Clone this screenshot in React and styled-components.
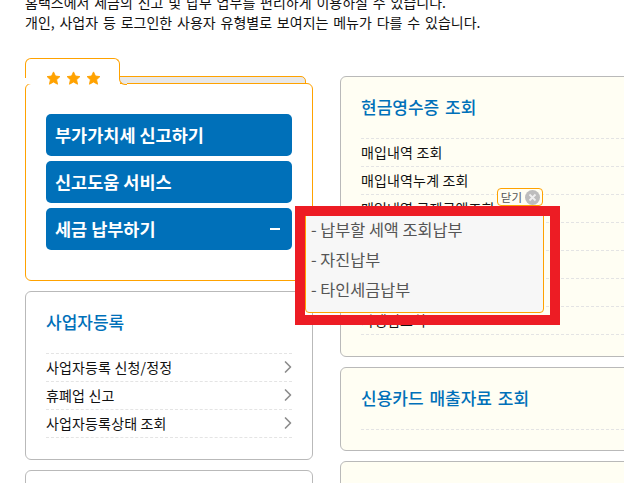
import React from "react";
import styled, { createGlobalStyle } from "styled-components";
import { ChevronRight } from "lucide-react";

const GlobalStyle = createGlobalStyle`
	html, body {
		margin: 0;
		padding: 0;
		height: 100%;
		overflow: hidden;
		background: #fff;
	}
	body {
		font-family: "Noto Sans CJK KR", "Noto Sans", sans-serif;
		color: #111;
	}
	* {
		box-sizing: border-box;
	}
`;

const colors = {
	blue: "#0070b9",
	orange: "#ffa200",
	line: "#b9b9b9",
	dash: "#e4e4e4",
	cream: "#fffef3",
};

const businessMenu = ["사업자등록 신청/정정", "휴폐업 신고", "사업자등록상태 조회"];
const cashMenu = [
	"매입내역 조회",
	"매입내역누계 조회",
	"매입내역 공제금액조회",
	"매출내역 조회",
	"매출내역누계 조회",
	"사업용 신용카드",
	"가맹점조회",
];
const payMenu = ["납부할 세액 조회납부", "자진납부", "타인세금납부"];

const Star = () => (
	<svg width="15" height="14" viewBox="0 0 24 23">
		<path
			d="M12 1.500l3.200 6.800 7.300.9-5.400 5.100 1.500 7.400L12 18.100l-6.600 3.600 1.500-7.400L1.500 9.200l7.300-.9z"
			fill={colors.orange}
			stroke={colors.orange}
			strokeWidth="1.500"
			strokeLinejoin="round"
		/>
	</svg>
);

const CloseIcon = () => (
	<svg width="15" height="15" viewBox="0 0 15 15">
		<circle cx="7.500" cy="7.500" r="7.500" fill="#bdbdbd" />
		<path d="M4.500 4.500l6 6M10.500 4.500l-6 6" stroke="#efefef" strokeWidth="1.800" />
	</svg>
);

const LinkList = ({ items }) => (
	<List>
		{items.map((item) => (
			<Row key={item}>
				{item}
				<ChevronRight size={20} color="#8c8c8c" strokeWidth={2} />
			</Row>
		))}
	</List>
);

const App = () => (
	<Page>
		<GlobalStyle />
		<Intro>
			<p>홈택스에서 세금의 신고 및 납부 업무를 편리하게 이용하실 수 있습니다.</p>
			<p>개인, 사업자 등 로그인한 사용자 유형별로 보여지는 메뉴가 다를 수 있습니다.</p>
		</Intro>
		<Columns>
			<Column>
				<Favorite>
					<BackTab />
					<FrontTab>
						<Star />
						<Star />
						<Star />
					</FrontTab>
					<FavoriteBody>
						<BlueButton>부가가치세 신고하기</BlueButton>
						<BlueButton>신고도움 서비스</BlueButton>
						<BlueButton>
							세금 납부하기
							<Minus />
						</BlueButton>
					</FavoriteBody>
				</Favorite>
				<Card $height={169}>
					<Title>사업자등록</Title>
					<LinkList items={businessMenu} />
				</Card>
				<Card $height={40} />
			</Column>
			<Column $wide>
				<Card $height={281} $cream>
					<Title>현금영수증 조회</Title>
					<LinkList items={cashMenu} />
				</Card>
				<Card $height={84} $cream>
					<Title>신용카드 매출자료 조회</Title>
					<List />
				</Card>
				<Card $height={40} $cream />
			</Column>
		</Columns>
		<Popup>
			<CloseTag>
				닫기
				<CloseIcon />
			</CloseTag>
			{payMenu.map((item) => (
				<PopupItem key={item}>{item}</PopupItem>
			))}
		</Popup>
		<Highlight />
	</Page>
);

const Page = styled.div`
	position: relative;
	width: 624px;
	height: 483px;
	overflow: hidden;
	padding: 0 0 0 25px;
`;

const Intro = styled.div`
	margin-top: -8px;
	font-size: 14px;
	line-height: 20px;
	word-spacing: 1.700px;

	p {
		margin: 0;
		white-space: nowrap;
	}
`;

const Columns = styled.div`
	display: flex;
	align-items: flex-start;
	gap: 27px;
	margin-top: 26px;
`;

const Column = styled.div`
	display: flex;
	flex-direction: column;
	flex: none;
	width: ${(p) => (p.$wide ? "320px" : "288px")};
	gap: 10px;
	padding-top: ${(p) => (p.$wide ? "18px" : "0")};
`;

const Favorite = styled.section`
	position: relative;
	height: 223px;
`;

const BackTab = styled.div`
	position: absolute;
	top: 18px;
	left: 88px;
	width: 193px;
	height: 10px;
	background: #e8e8e8;
	border: 1px solid ${colors.orange};
	border-radius: 0 5px 0 0;
`;

const FrontTab = styled.div`
	position: absolute;
	top: 0;
	left: 0;
	z-index: 1;
	display: flex;
	align-items: flex-start;
	gap: 5px;
	width: 95px;
	height: 20px;
	padding: 12px 0 0 20px;
	background: #fff;
	border: 1px solid ${colors.orange};
	border-bottom: 0;
	border-radius: 6px 6px 0 0;

	svg {
		position: relative;
		z-index: 1;
		flex: none;
	}

	&::before {
		content: "";
		position: absolute;
		top: 100%;
		left: 0;
		right: -1px;
		height: 6px;
		background: #fff;
	}

	&::after {
		content: "";
		position: absolute;
		top: 18px;
		left: 100%;
		width: 7px;
		height: 7px;
		background: #e8e8e8;
		border-left: 1px solid ${colors.orange};
		border-bottom: 1px solid ${colors.orange};
		border-bottom-left-radius: 6px;
	}
`;

const FavoriteBody = styled.div`
	position: absolute;
	top: 25px;
	left: 0;
	right: 0;
	bottom: 0;
	display: flex;
	flex-direction: column;
	gap: 5px;
	padding: 30px 20px 0;
	background: #fff;
	border: 1px solid ${colors.orange};
	border-radius: 6px;
`;

const BlueButton = styled.div`
	display: flex;
	align-items: center;
	justify-content: space-between;
	height: 42px;
	padding: 0 12px 2px 9px;
	background: ${colors.blue};
	border-radius: 5px;
	color: #fff;
	font-size: 17.500px;
	font-weight: 700;
`;

const Minus = styled.span`
	width: 10px;
	height: 2px;
	margin-top: 2px;
	background: #fff;
`;

const Card = styled.section`
	height: ${(p) => p.$height}px;
	padding: 0 20px;
	background: ${(p) => (p.$cream ? colors.cream : "#fff")};
	border: 1px solid ${colors.line};
	border-radius: 6px;
`;

const Title = styled.h3`
	height: 61px;
	margin: 0;
	padding-top: 18px;
	color: ${colors.blue};
	font-size: 17px;
	font-weight: 500;
	line-height: 24px;
	word-spacing: 2px;
	white-space: nowrap;
`;

const List = styled.ul`
	margin: 0;
	padding: 0;
	list-style: none;
	border-top: 1px dashed ${colors.dash};
`;

const Row = styled.li`
	display: flex;
	align-items: center;
	justify-content: space-between;
	height: 28px;
	padding-bottom: 1px;
	border-bottom: 1px dashed ${colors.dash};
	font-size: 14px;
	letter-spacing: 0.150px;
	white-space: nowrap;

	svg {
		margin-right: -6px;
	}
`;

const Popup = styled.div`
	position: absolute;
	top: 208px;
	left: 305px;
	width: 239px;
	height: 105px;
	padding: 5px 0 0 5px;
	background: #f7f7f7;
	border: 1px solid ${colors.orange};
	border-radius: 4px;
`;

const PopupItem = styled.div`
	height: 30px;
	color: #555;
	font-size: 16.300px;
	line-height: 30px;
	white-space: nowrap;

	&::before {
		content: "- ";
	}
`;

const CloseTag = styled.div`
	position: absolute;
	top: -21px;
	right: 0;
	display: flex;
	align-items: center;
	gap: 3px;
	height: 18px;
	padding: 0 2px 0 3px;
	background: #fffef3;
	border: 1px solid ${colors.orange};
	border-radius: 4px;
	color: #555;
	font-size: 11.500px;
`;

const Highlight = styled.div`
	position: absolute;
	top: 206px;
	left: 295px;
	width: 265px;
	height: 119px;
	border: 10px solid #ed1c24;
`;

export default App;
